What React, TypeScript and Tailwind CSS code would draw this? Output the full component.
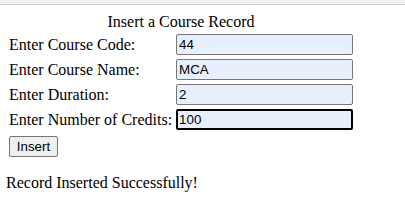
import React from 'react';

const fields = [
  { label: 'Enter Course Code:', value: '44' },
  { label: 'Enter Course Name:', value: 'MCA' },
  { label: 'Enter Duration:', value: '2' },
  { label: 'Enter Number of Credits:', value: '100', focused: true },
];

const App: React.FC = () => {
  return (
    <div className="min-h-screen bg-white text-black font-['Liberation_Serif','Times_New_Roman',serif] text-[16px]">
      {/* top strip */}
      <div className="h-[4px] bg-[#f0f0f0]" />
      <div className="h-px bg-[#cfcfcf]" />

      <div className="pl-[6px] pt-[8px]">
        <div className="w-[350px]">
          <div className="text-center leading-[18px] mb-[3px]">Insert a Course Record</div>
          <div className="grid grid-cols-[auto_auto] gap-[4px] px-[3px] justify-start items-center">
            {fields.map((f) => (
              <React.Fragment key={f.label}>
                <div className="leading-[18px] whitespace-nowrap">{f.label}</div>
                <input
                  readOnly
                  value={f.value}
                  className={`w-[177px] h-[21px] bg-[#e8f0fe] text-black font-['Liberation_Sans',Arial,sans-serif] text-[13.333px] rounded-[2px] outline-none ${
                    f.focused ? 'border-2 border-black px-[1px]' : 'border border-[#767676] px-[2px]'
                  }`}
                />
              </React.Fragment>
            ))}
            <div>
              <button className="w-[49px] h-[21px] bg-[#efefef] border border-[#767676] rounded-[2px] font-['Liberation_Sans',Arial,sans-serif] text-[13.333px] leading-none text-black">
                Insert
              </button>
            </div>
          </div>
        </div>
        <p className="mt-[16px] leading-[18px]">Record Inserted Successfully!</p>
      </div>
    </div>
  );
};

export default App;
